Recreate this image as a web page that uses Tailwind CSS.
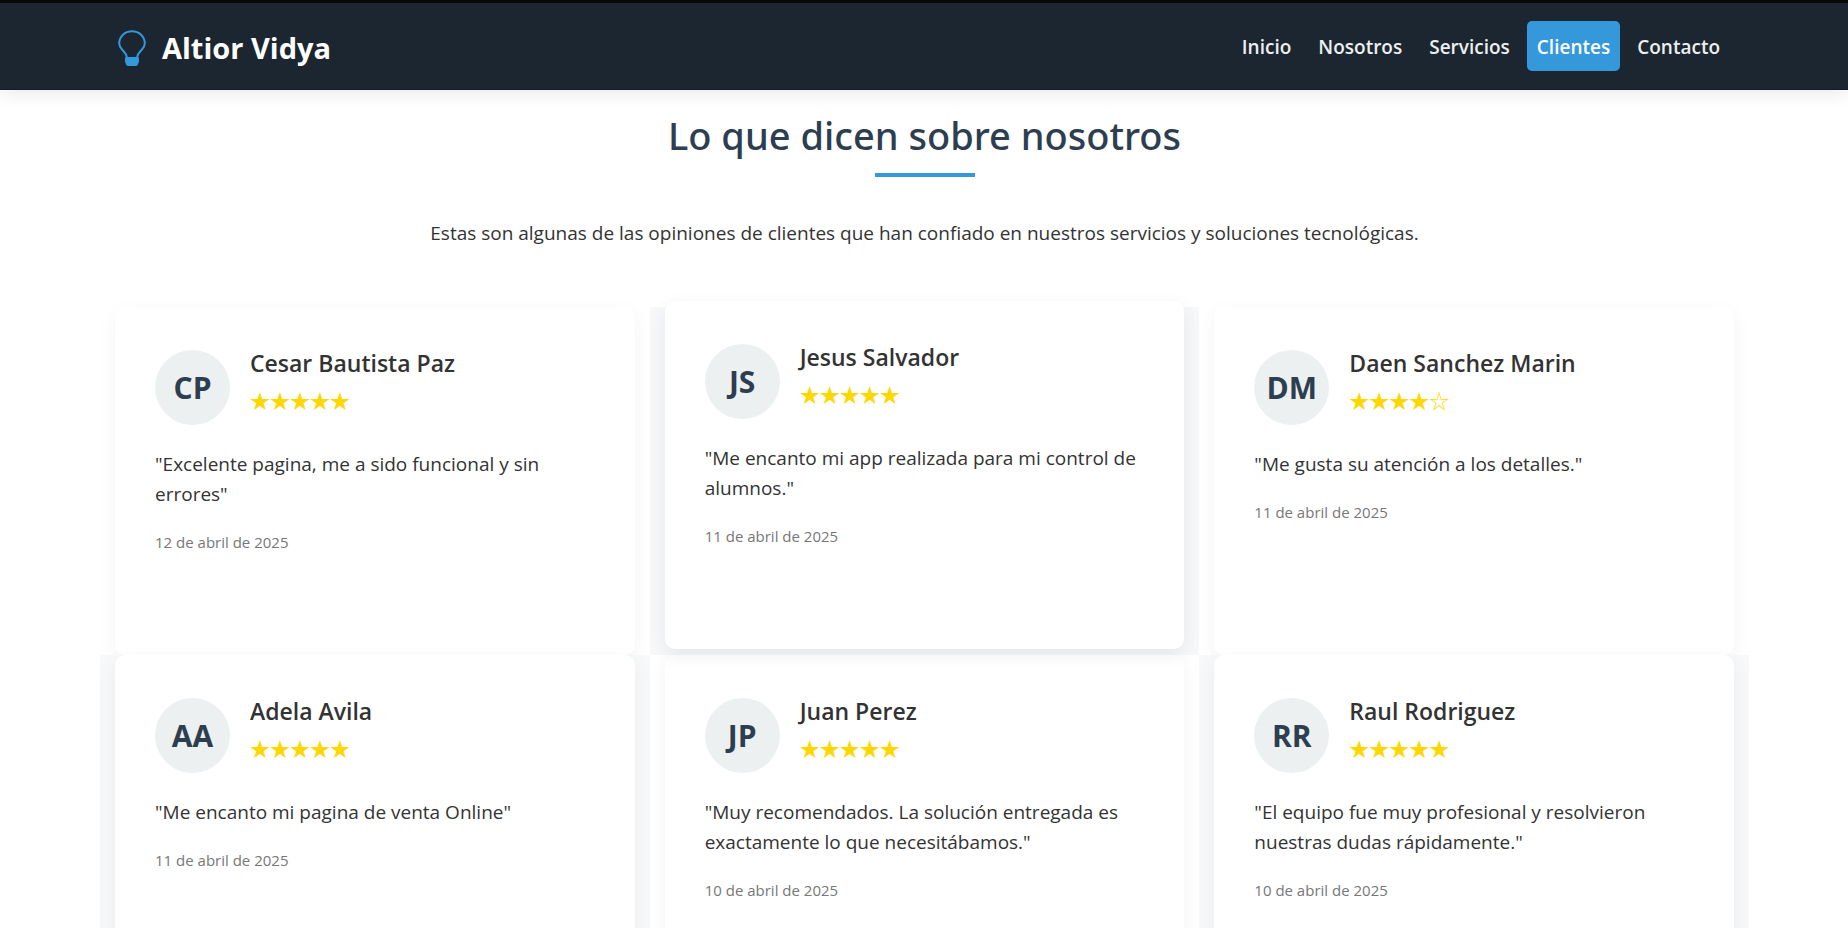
<!DOCTYPE html>
<html lang="es">
<head>
<meta charset="utf-8">
<meta name="viewport" content="width=device-width, initial-scale=1">
<title>Altior Vidya - Clientes</title>
<script src="https://cdn.jsdelivr.net/npm/@tailwindcss/browser@4"></script>
</head>
<body class="bg-white font-['Open_Sans','Noto_Sans',sans-serif] text-[19px] leading-[30px] text-[#333333]">
<header class="sticky top-0 z-20 border-t-[3px] border-b border-t-[#07090b] border-b-[#171c28] bg-[#1c2630] shadow-[0_2px_20px_rgba(0,0,0,0.1)]">
  <div class="mx-auto flex max-w-[1650px] flex-wrap items-center justify-between px-[19px] py-[18px]">
    <a href="#" class="flex items-center gap-4 pt-1 text-[29px] leading-[46px] font-bold text-white">
      <svg class="h-9 w-7" viewBox="0 0 28 36" fill="none" aria-hidden="true">
        <path d="M9 27.600C8.600 23.800 6.400 22.200 4.300 19.800C2.400 17.600 1.200 15.800 1.200 13.400C1.200 6.400 6.900 1.200 14 1.200S26.800 6.400 26.800 13.400C26.800 15.800 25.600 17.600 23.700 19.800C21.600 22.200 19.400 23.800 19 27.600" stroke="#3498db" stroke-width="2"/>
        <path d="M8 27h12c1 0 1.200 1 .7 1.700c.6.6.6 1.500 0 2.200c.6.8.3 1.600-.4 2.100c0 1.400-1 3-2.500 3h-7.600c-1.500 0-2.500-1.600-2.500-3c-.7-.5-1-1.300-.4-2.100c-.6-.7-.6-1.600 0-2.200c-.5-.7-.3-1.700.7-1.700z" fill="#3498db"/>
      </svg>
      Altior Vidya
    </a>
    <nav aria-label="Principal" class="flex flex-wrap gap-[7px] font-semibold text-[#ecf0f1]">
      <a href="#inicio" class="rounded-[5px] px-[10px] pt-[11px] pb-[9px]">Inicio</a>
      <a href="#nosotros" class="rounded-[5px] px-[10px] pt-[11px] pb-[9px]">Nosotros</a>
      <a href="#servicios" class="rounded-[5px] px-[10px] pt-[11px] pb-[9px]">Servicios</a>
      <a href="#clientes" aria-current="page" class="rounded-[5px] bg-[#3498db] px-[10px] pt-[11px] pb-[9px] text-white">Clientes</a>
      <a href="#contacto" class="rounded-[5px] px-[10px] pt-[11px] pb-[9px]">Contacto</a>
    </nav>
  </div>
</header>
<main id="clientes" class="mx-auto max-w-[1650px] pt-5 pl-px">
  <h2 class="text-center font-['Noto_Sans',sans-serif] text-[38px] leading-[50px] font-medium text-[#2c3e50]">Lo que dicen sobre nosotros</h2>
  <div class="mx-auto mt-[13px] h-1 w-[100px] bg-[#3498db]"></div>
  <p class="mt-[41px] text-center">Estas son algunas de las opiniones de clientes que han confiado en nuestros servicios y soluciones tecnológicas.</p>

  <div class="mt-[59px] grid auto-rows-[minmax(348px,auto)] grid-cols-1 md:grid-cols-2 lg:grid-cols-3">
    <div class="flex px-[15px]">
      <article class="flex-1 rounded-[10px] bg-white px-10 pt-[43px] pb-10 shadow-[0_6px_20px_rgba(0,0,0,0.05)]">
        <div class="flex gap-5">
          <div class="flex size-[75px] shrink-0 items-center justify-center rounded-full bg-[#ecf0f1] text-[30px] font-bold text-[#2c3e50]">CP</div>
          <div>
            <h3 class="text-[23px] leading-[26px] font-semibold">Cesar Bautista Paz</h3>
            <div role="img" aria-label="5 de 5 estrellas" class="mt-3 font-['Noto_Sans_CJK_JP',sans-serif] text-[20px] leading-[26px] text-[#ffd700]">★★★★★</div>
          </div>
        </div>
        <p class="mt-6">"Excelente pagina, me a sido funcional y sin errores"</p>
        <p class="mt-[21px] text-[15px] leading-[24px] text-[#777777]">12 de abril de 2025</p>
      </article>
    </div>
    <div class="flex bg-[#f6f8fa] px-[15px]">
      <article class="z-10 flex-1 -translate-y-1.5 rounded-[10px] bg-white px-10 pt-[43px] pb-10 shadow-[0_6px_20px_rgba(0,0,0,0.07)]">
        <div class="flex gap-5">
          <div class="flex size-[75px] shrink-0 items-center justify-center rounded-full bg-[#ecf0f1] text-[30px] font-bold text-[#2c3e50]">JS</div>
          <div>
            <h3 class="text-[23px] leading-[26px] font-semibold">Jesus Salvador</h3>
            <div role="img" aria-label="5 de 5 estrellas" class="mt-3 font-['Noto_Sans_CJK_JP',sans-serif] text-[20px] leading-[26px] text-[#ffd700]">★★★★★</div>
          </div>
        </div>
        <p class="mt-6">"Me encanto mi app realizada para mi control de alumnos."</p>
        <p class="mt-[21px] text-[15px] leading-[24px] text-[#777777]">11 de abril de 2025</p>
      </article>
    </div>
    <div class="flex px-[15px]">
      <article class="flex-1 rounded-[10px] bg-white px-10 pt-[43px] pb-10 shadow-[0_6px_20px_rgba(0,0,0,0.05)]">
        <div class="flex gap-5">
          <div class="flex size-[75px] shrink-0 items-center justify-center rounded-full bg-[#ecf0f1] text-[30px] font-bold text-[#2c3e50]">DM</div>
          <div>
            <h3 class="text-[23px] leading-[26px] font-semibold">Daen Sanchez Marin</h3>
            <div role="img" aria-label="4 de 5 estrellas" class="mt-3 font-['Noto_Sans_CJK_JP',sans-serif] text-[20px] leading-[26px] text-[#ffd700]">★★★★☆</div>
          </div>
        </div>
        <p class="mt-6">"Me gusta su atención a los detalles."</p>
        <p class="mt-[21px] text-[15px] leading-[24px] text-[#777777]">11 de abril de 2025</p>
      </article>
    </div>
    <div class="flex bg-[#f6f8fa] px-[15px]">
      <article class="flex-1 rounded-[10px] bg-white px-10 pt-[43px] pb-10 shadow-[0_6px_20px_rgba(0,0,0,0.05)]">
        <div class="flex gap-5">
          <div class="flex size-[75px] shrink-0 items-center justify-center rounded-full bg-[#ecf0f1] text-[30px] font-bold text-[#2c3e50]">AA</div>
          <div>
            <h3 class="text-[23px] leading-[26px] font-semibold">Adela Avila</h3>
            <div role="img" aria-label="5 de 5 estrellas" class="mt-3 font-['Noto_Sans_CJK_JP',sans-serif] text-[20px] leading-[26px] text-[#ffd700]">★★★★★</div>
          </div>
        </div>
        <p class="mt-6">"Me encanto mi pagina de venta Online"</p>
        <p class="mt-[21px] text-[15px] leading-[24px] text-[#777777]">11 de abril de 2025</p>
      </article>
    </div>
    <div class="flex bg-white px-[15px]">
      <article class="flex-1 rounded-[10px] bg-white px-10 pt-[43px] pb-10 shadow-[0_6px_20px_rgba(0,0,0,0.05)]">
        <div class="flex gap-5">
          <div class="flex size-[75px] shrink-0 items-center justify-center rounded-full bg-[#ecf0f1] text-[30px] font-bold text-[#2c3e50]">JP</div>
          <div>
            <h3 class="text-[23px] leading-[26px] font-semibold">Juan Perez</h3>
            <div role="img" aria-label="5 de 5 estrellas" class="mt-3 font-['Noto_Sans_CJK_JP',sans-serif] text-[20px] leading-[26px] text-[#ffd700]">★★★★★</div>
          </div>
        </div>
        <p class="mt-6">"Muy recomendados. La solución entregada es exactamente lo que necesitábamos."</p>
        <p class="mt-[21px] text-[15px] leading-[24px] text-[#777777]">10 de abril de 2025</p>
      </article>
    </div>
    <div class="flex bg-[#f6f8fa] px-[15px]">
      <article class="flex-1 rounded-[10px] bg-white px-10 pt-[43px] pb-10 shadow-[0_6px_20px_rgba(0,0,0,0.05)]">
        <div class="flex gap-5">
          <div class="flex size-[75px] shrink-0 items-center justify-center rounded-full bg-[#ecf0f1] text-[30px] font-bold text-[#2c3e50]">RR</div>
          <div>
            <h3 class="text-[23px] leading-[26px] font-semibold">Raul Rodriguez</h3>
            <div role="img" aria-label="5 de 5 estrellas" class="mt-3 font-['Noto_Sans_CJK_JP',sans-serif] text-[20px] leading-[26px] text-[#ffd700]">★★★★★</div>
          </div>
        </div>
        <p class="mt-6">"El equipo fue muy profesional y resolvieron nuestras dudas rápidamente."</p>
        <p class="mt-[21px] text-[15px] leading-[24px] text-[#777777]">10 de abril de 2025</p>
      </article>
    </div>
  </div>
</main>
</body>
</html>
